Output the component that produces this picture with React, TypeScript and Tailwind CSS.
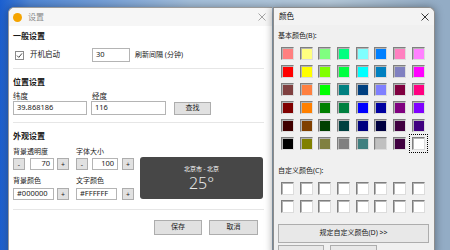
const basicColors = [
  ['#FF8080', '#FFFF80', '#80FF80', '#00FF80', '#80FFFF', '#0080FF', '#FF80C0', '#FF80FF'],
  ['#FF0000', '#FFFF00', '#80FF00', '#00FF40', '#00FFFF', '#0080C0', '#8080C0', '#FF00FF'],
  ['#804040', '#FF8040', '#00FF00', '#008080', '#004080', '#8080FF', '#800040', '#FF0080'],
  ['#800000', '#FF8000', '#008000', '#008040', '#0000FF', '#0000A0', '#800080', '#8000FF'],
  ['#400000', '#804000', '#004000', '#004040', '#000080', '#000040', '#400040', '#400080'],
  ['#000000', '#808000', '#808040', '#808080', '#408080', '#C0C0C0', '#400040', '#FFFFFF'],
];

function CloseIcon({ color }: { color: string }) {
  return (
    <svg width="8" height="8" viewBox="0 0 8 8" className="shrink-0">
      <path d="M0.5 0.5 L7.5 7.5 M7.5 0.5 L0.5 7.5" stroke={color} strokeWidth="0.9" />
    </svg>
  );
}

interface FieldProps {
  value: string;
  className: string;
}

function Field({ value, className }: FieldProps) {
  return (
    <div
      className={[
        'flex items-center px-[3px] bg-white border border-[#b4b4b4] text-[7.5px] text-[#222] leading-none',
        className,
      ].join(' ')}
    >
      {value}
    </div>
  );
}

function SmallButton({ label }: { label: string }) {
  return (
    <div className="w-[12px] h-[12px] flex items-center justify-center bg-[#e1e1e1] border border-[#adadad] text-[7px] text-[#222] leading-none">
      {label}
    </div>
  );
}

function Separator() {
  return <div className="h-px bg-[#e6e6e6]" />;
}

function SettingsWindow() {
  return (
    <div className="absolute left-[8px] top-[7px] w-[264px] h-[250px] bg-white rounded-tl-[6px] border-l border-t border-[#9a9a9a] shadow-[0_0_8px_rgba(0,0,0,0.35)] flex flex-col">
      {/* title bar */}
      <div className="h-[18px] flex items-center bg-[#f6f6f6] rounded-tl-[6px] pl-[4px] pr-[6px]">
        <div className="w-[9px] h-[9px] rounded-full bg-[#f5a400]" />
        <span className="ml-[6px] text-[8px] text-[#8a8a8a]">设置</span>
        <div className="flex-1" />
        <CloseIcon color="#9a9a9a" />
      </div>

      <div className="flex flex-col pl-[4px] pr-[8px] text-[#1a1a1a]">
        {/* 一般设置 */}
        <div className="mt-[5px] h-[10px] leading-[10px] text-[8px] font-bold">一般设置</div>
        <div className="mt-[7px] h-[14px] flex items-center">
          <div className="ml-[2px] w-[9px] h-[9px] border border-[#8a8a8a] bg-white flex items-center justify-center">
            <svg width="7" height="7" viewBox="0 0 7 7">
              <path d="M1 3.6 L2.8 5.4 L6 1.4" fill="none" stroke="#333" strokeWidth="0.9" />
            </svg>
          </div>
          <span className="ml-[6px] text-[7.5px]">开机启动</span>
          <Field value="30" className="ml-[32px] w-[38px] h-[14px]" />
          <span className="ml-[5px] text-[7px]">刷新间隔 (分钟)</span>
        </div>
        <div className="mt-[6px]">
          <Separator />
        </div>

        {/* 位置设置 */}
        <div className="mt-[8px] h-[10px] leading-[10px] text-[8px] font-bold">位置设置</div>
        <div className="mt-[4px] h-[10px] flex text-[7.5px] leading-[10px]">
          <span className="w-[79px]">纬度</span>
          <span>经度</span>
        </div>
        <div className="h-[14px] flex items-center">
          <Field value="39.868186" className="w-[74px] h-[14px]" />
          <Field value="116" className="ml-[4px] w-[75px] h-[14px]" />
          <div className="ml-[8px] w-[37px] h-[13px] flex items-center justify-center bg-[#e1e1e1] border border-[#adadad] text-[7px]">
            查找
          </div>
        </div>
        <div className="mt-[7px]">
          <Separator />
        </div>

        {/* 外观设置 */}
        <div className="mt-[8px] h-[10px] leading-[10px] text-[8px] font-bold">外观设置</div>
        <div className="flex">
          <div className="flex flex-col">
            <div className="mt-[6px] h-[10px] flex text-[7px] leading-[10px]">
              <span className="w-[63px]">背景透明度</span>
              <span>字体大小</span>
            </div>
            <div className="mt-[1px] h-[12px] flex items-center">
              <SmallButton label="-" />
              <Field value="70" className="ml-[5px] w-[24px] h-[12px] justify-end" />
              <div className="ml-[3px]">
                <SmallButton label="+" />
              </div>
              <div className="ml-[7px]">
                <SmallButton label="-" />
              </div>
              <Field value="100" className="ml-[4px] w-[26px] h-[12px] justify-end" />
              <div className="ml-[4px]">
                <SmallButton label="+" />
              </div>
            </div>
            <div className="mt-[6px] h-[10px] flex text-[7px] leading-[10px]">
              <span className="w-[63px]">背景颜色</span>
              <span>文字颜色</span>
            </div>
            <div className="mt-[2px] h-[12px] flex items-center">
              <Field value="#000000" className="w-[41px] h-[12px] text-[6.5px]" />
              <div className="ml-[3px]">
                <SmallButton label="+" />
              </div>
              <Field value="#FFFFFF" className="ml-[7px] w-[41px] h-[12px] text-[6.5px]" />
              <div className="ml-[5px]">
                <SmallButton label="+" />
              </div>
            </div>
          </div>
          <div className="ml-[6px] mt-[16px] w-[123px] h-[42px] bg-[#474747] rounded-[3px] flex flex-col items-center justify-center">
            <span className="text-[6px] leading-[8px] text-white">北京市 - 北京</span>
            <span className="mt-[1px] text-[16px] leading-[18px] font-light text-[#e6e6e6]">25°</span>
          </div>
        </div>
        <div className="mt-[9px]">
          <Separator />
        </div>

        <div className="mt-[10px] flex justify-end gap-[7px] pr-[6px]">
          <div className="w-[48px] h-[15px] flex items-center justify-center bg-[#e1e1e1] border border-[#adadad] text-[7px]">
            保存
          </div>
          <div className="w-[49px] h-[15px] flex items-center justify-center bg-[#e1e1e1] border border-[#adadad] text-[7px]">
            取消
          </div>
        </div>
      </div>
    </div>
  );
}

function Swatch({ color, selected }: { color: string; selected?: boolean }) {
  return (
    <div
      className={[
        'w-[15px] h-[15px] p-px',
        selected ? 'outline outline-1 outline-dotted outline-black outline-offset-[1px]' : '',
      ].join(' ')}
    >
      <div
        className="w-full h-full border border-t-[#7f7f7f] border-l-[#7f7f7f] border-b-[#dcdcdc] border-r-[#dcdcdc] shadow-[inset_1px_1px_0_#b4b4b4]"
        style={{ backgroundColor: color }}
      />
    </div>
  );
}

function ColorDialog() {
  return (
    <div className="absolute left-[273px] top-[7px] w-[162px] h-[250px] bg-[#f0f0f0] rounded-tr-[6px] border-t border-r border-l border-[#8c8c8c] shadow-[0_0_8px_rgba(0,0,0,0.4)] flex flex-col">
      <div className="h-[18px] flex items-center justify-between bg-[#f3f3f3] rounded-tr-[6px] pl-[5px] pr-[5px]">
        <span className="text-[7.5px] text-[#111]">颜色</span>
        <CloseIcon color="#222" />
      </div>
      <div className="flex flex-col pl-[4px] text-[#1a1a1a]">
        <div className="mt-[6px] h-[10px] leading-[10px] text-[7px]">基本颜色(B):</div>
        <div className="mt-[5px] ml-[2px] grid grid-cols-[repeat(8,15px)] gap-x-[3.7px] gap-y-[3px]">
          {basicColors.flat().map((c, i) => (
            <Swatch key={i} color={c} selected={i === 47} />
          ))}
        </div>
        <div className="mt-[15px] h-[10px] leading-[10px] text-[7px]">自定义颜色(C):</div>
        <div className="mt-[5px] ml-[2px] grid grid-cols-[repeat(8,15px)] gap-x-[3.7px] gap-y-[3px]">
          {Array.from({ length: 16 }).map((_, i) => (
            <Swatch key={i} color="#FFFFFF" />
          ))}
        </div>
        <div className="mt-[10px] w-[151px] h-[19px] flex items-center justify-center bg-[#e8e8e8] border border-[#adadad] text-[7px]">
          规定自定义颜色(D) &gt;&gt;
        </div>
        <div className="mt-[2px] flex gap-[6px]">
          <div className="w-[46px] h-[12px] bg-[#e8e8e8] border border-[#adadad]" />
          <div className="w-[47px] h-[12px] bg-[#e8e8e8] border border-[#adadad]" />
        </div>
      </div>
    </div>
  );
}

export default function App() {
  return (
    <div className="relative w-[450px] h-[250px] overflow-hidden bg-[linear-gradient(90deg,#1b5fcf_0px,#4f86d6_30px,#a4bfdb_190px,#b6cadb_330px,#93acc5_440px)] font-['Noto_Sans','Noto_Sans_CJK_SC',sans-serif]">
      <SettingsWindow />
      <ColorDialog />
    </div>
  );
}
